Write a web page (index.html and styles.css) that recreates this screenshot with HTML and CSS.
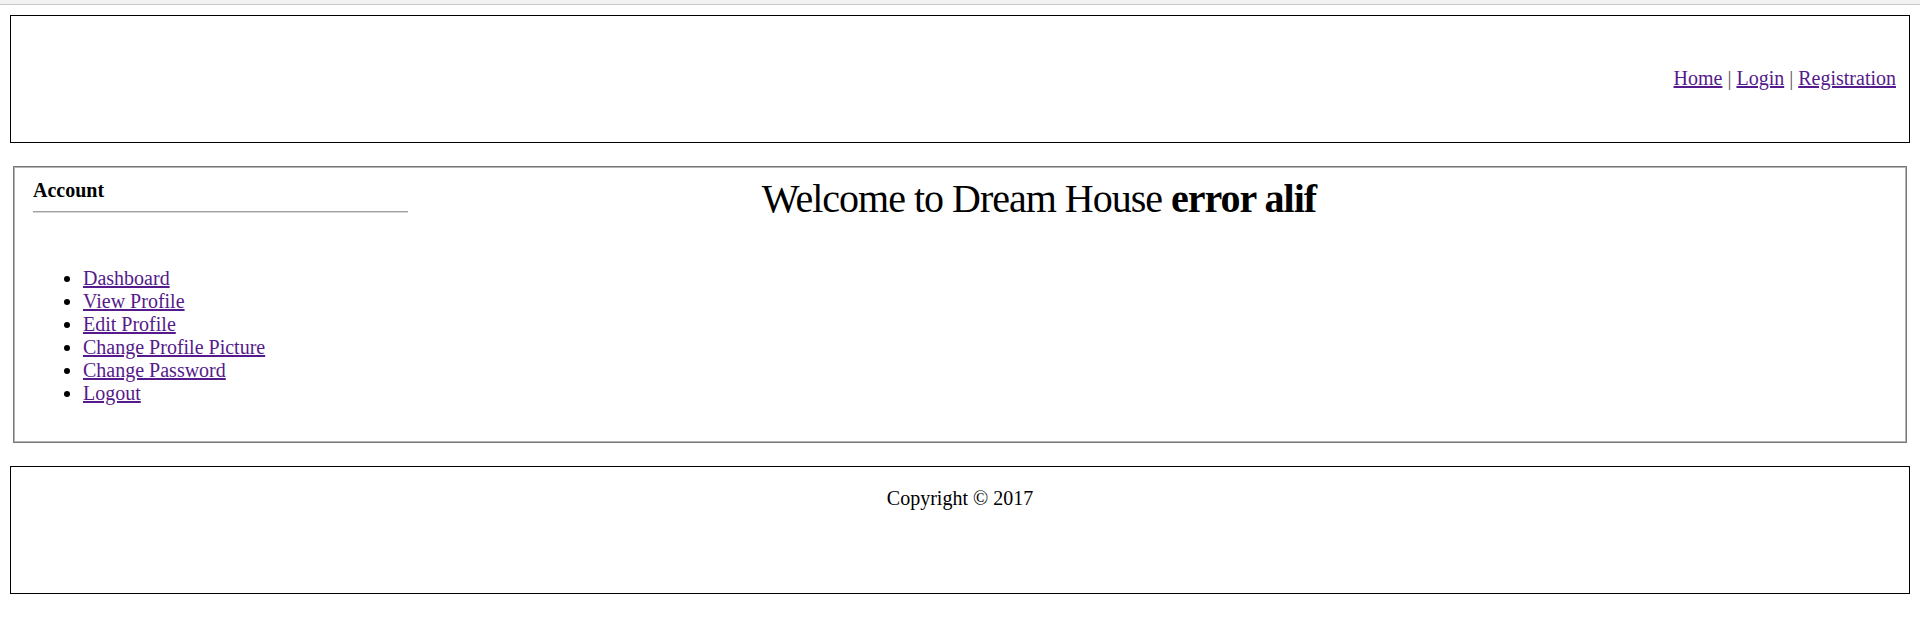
FILE: index.html
```html
<!DOCTYPE html>
<html>
<head>
<meta charset="utf-8">
<title>Dream House</title>
<link rel="stylesheet" href="styles.css">
</head>
<body>
<div class="topstrip"></div>
<div class="page">
  <div class="header">
    <nav class="topnav"><a href="#">Home</a> <span class="sep">|</span> <a href="#">Login</a> <span class="sep">|</span> <a href="#">Registration</a></nav>
  </div>
  <div class="middle">
    <div class="sidebar">
      <div class="side-title">Account</div>
      <div class="side-rule"></div>
      <ul class="side-menu">
        <li><a href="#">Dashboard</a></li>
        <li><a href="#">View Profile</a></li>
        <li><a href="#">Edit Profile</a></li>
        <li><a href="#">Change Profile Picture</a></li>
        <li><a href="#">Change Password</a></li>
        <li><a href="#">Logout</a></li>
      </ul>
    </div>
    <div class="main">
      <h1 class="welcome">Welcome to Dream House <b>error alif</b></h1>
    </div>
  </div>
  <div class="footer">
    <p class="copy">Copyright © 2017</p>
  </div>
</div>
</body>
</html>
```
FILE: styles.css
```css
html, body {
  margin: 0;
  padding: 0;
  background: #fff;
}
body {
  font-family: "Liberation Serif", "Times New Roman", serif;
  font-size: 20px;
  line-height: 23px;
  color: #000;
}
a {
  color: #551a8b;
  text-decoration: underline;
}
.topstrip {
  height: 4px;
  background: #f2f2f2;
  border-bottom: 1px solid #c9c9c9;
}
.page {
  padding: 0 10px;
}
.header {
  margin-top: 10px;
  height: 128px;
  box-sizing: border-box;
  border: 1px solid #000;
  display: flex;
  align-items: center;
  justify-content: flex-end;
  padding-right: 13px;
  padding-bottom: 2px;
}
.sep {
  color: #555;
}
.middle {
  margin: 23px 3px 0;
  height: 277px;
  box-sizing: border-box;
  border: 1px solid #777;
  box-shadow: inset 0 0 0 1px #b4b4b4;
  display: flex;
}
.sidebar {
  width: 399px;
  flex: none;
  box-sizing: border-box;
  padding: 12px 0 0 19px;
}
.side-title {
  font-weight: bold;
}
.side-rule {
  width: 375px;
  margin-top: 9px;
  border-top: 1px solid #a0a0a0;
  border-bottom: 1px solid #d8d8d8;
}
.side-menu {
  margin: 54px 0 0;
  padding-left: 50px;
}
.main {
  flex: 1;
  padding-right: 241px;
  text-align: center;
}
.welcome {
  margin: 9px 0 0;
  font-size: 40px;
  line-height: 46px;
  font-weight: normal;
  letter-spacing: -1px;
}
.welcome b {
  font-weight: bold;
}
.footer {
  margin-top: 23px;
  height: 128px;
  box-sizing: border-box;
  border: 1px solid #000;
  padding-top: 20px;
  text-align: center;
}
.copy {
  margin: 0;
}
```
